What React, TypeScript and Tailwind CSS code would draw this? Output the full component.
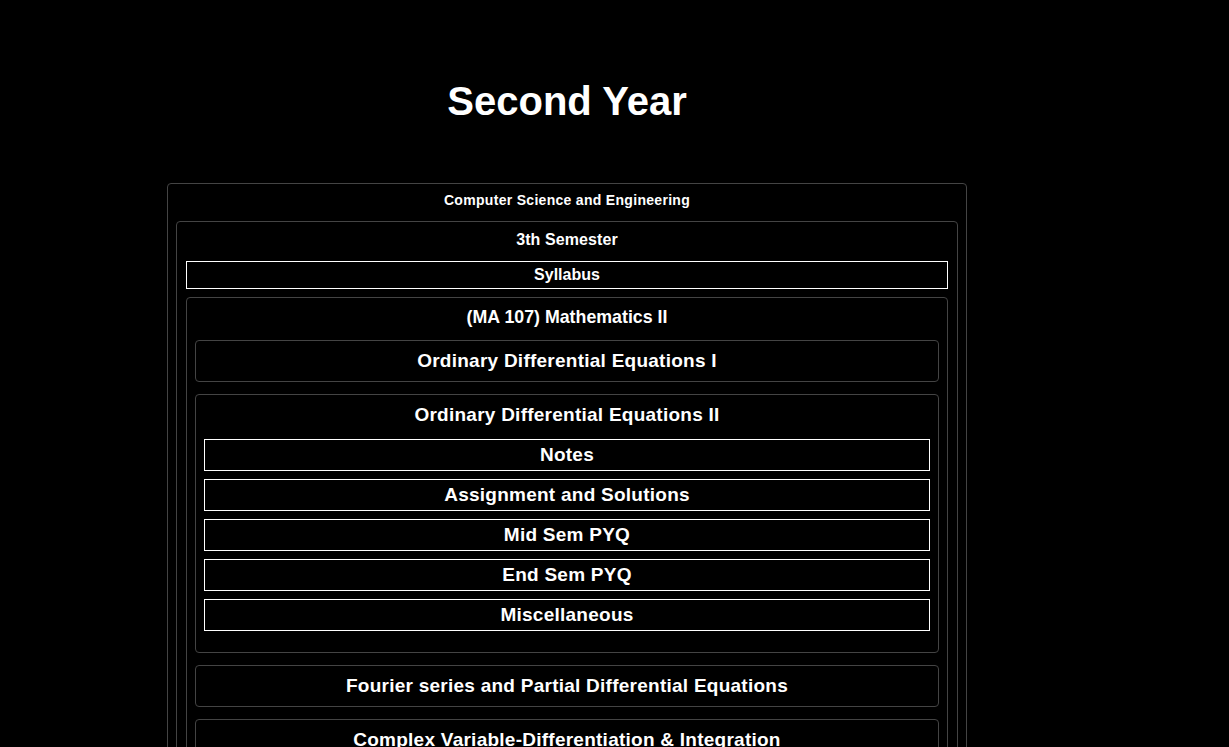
import React from "react";

const font = { fontFamily: '"Liberation Sans", Arial, sans-serif' };

function Topic({ title, items }: { title: string; items?: string[] }) {
  return (
    <div className="mb-3 rounded border border-[#444] p-2">
      <div className="text-center text-[19px] font-bold leading-[24px] tracking-[0.25px]">{title}</div>
      {items && (
        <div className="mb-[13px] mt-3 flex flex-col gap-2">
          {items.map((it) => (
            <div
              key={it}
              className="border border-white text-center text-[19px] font-bold leading-[30px] tracking-[0.25px]"
            >
              {it}
            </div>
          ))}
        </div>
      )}
    </div>
  );
}

export default function App() {
  return (
    <div className="min-h-screen bg-black text-white" style={font}>
      <div className="ml-[167px] w-[800px] pt-[78px]">
        <h1 className="mb-[59px] text-center text-[40px] font-bold leading-[46px]">Second Year</h1>
        <div className="rounded border border-[#444] p-2">
          <div className="mb-[13px] text-center text-[14px] font-bold leading-[16px] tracking-[0.3px]">
            Computer Science and Engineering
          </div>
          <div className="rounded border border-[#444] px-[9px] py-2">
            <div className="mb-3 pt-px text-center text-[16px] font-bold leading-[18px] tracking-[0.1px]">
              3th Semester
            </div>
            <div className="mb-2 border border-white text-center text-[16px] font-bold leading-[26px]">Syllabus</div>
            <div className="rounded border border-[#444] p-2">
              <div className="mb-3 text-center text-[17.8px] font-bold leading-[22px]">(MA 107) Mathematics II</div>
              <Topic title="Ordinary Differential Equations I" />
              <Topic
                title="Ordinary Differential Equations II"
                items={["Notes", "Assignment and Solutions", "Mid Sem PYQ", "End Sem PYQ", "Miscellaneous"]}
              />
              <Topic title="Fourier series and Partial Differential Equations" />
              <Topic title="Complex Variable-Differentiation & Integration" />
              <Topic title="Probability and Statistics" />
            </div>
          </div>
        </div>
      </div>
    </div>
  );
}
